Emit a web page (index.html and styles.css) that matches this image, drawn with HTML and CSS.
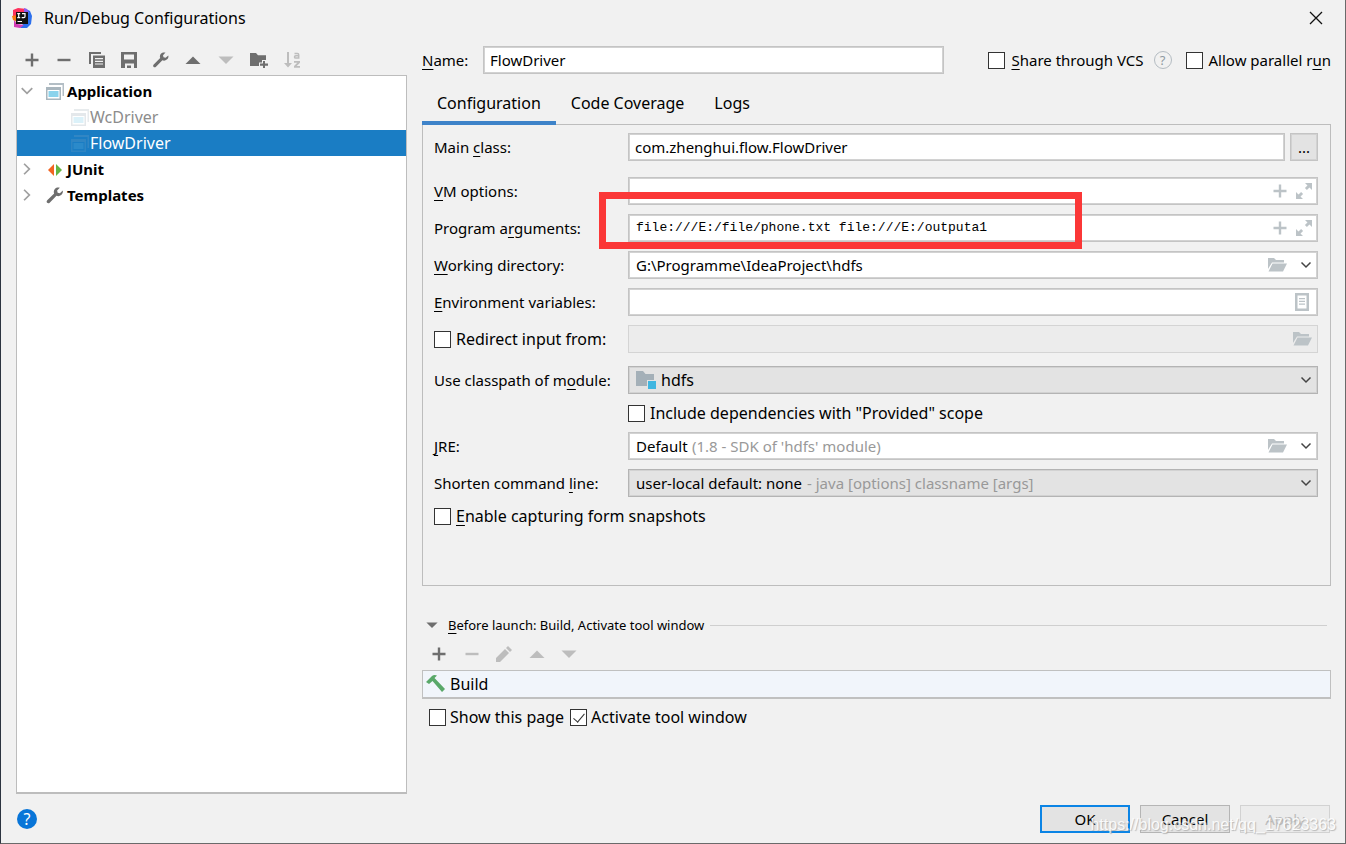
FILE: index.html
```html
<!DOCTYPE html>
<html lang="en">
<head>
<meta charset="utf-8">
<title>Run/Debug Configurations</title>
<link rel="stylesheet" href="styles.css">
</head>
<body>
<svg class="sprite" aria-hidden="true">
  <symbol id="plus" viewBox="0 0 16 16"><path d="M6.800 1.500h2.400v5.300h5.300v2.400H9.200v5.300H6.800V9.200H1.500V6.800h5.300z"/></symbol>
  <symbol id="minus" viewBox="0 0 16 16"><path d="M1.500 6.800h13v2.400h-13z"/></symbol>
  <symbol id="up" viewBox="0 0 16 16"><path d="M8 4.500l7.500 7.500H.5z"/></symbol>
  <symbol id="down" viewBox="0 0 16 16"><path d="M8 12L.5 4.500h15z"/></symbol>
  <symbol id="wrench" viewBox="0 0 16 16"><path d="M15.300 3.400l-2.700 2.400-2.100-.5-.5-2L12.500.6C10.800.1 9 .5 7.900 1.800 6.800 3 6.600 4.700 7.200 6.100L.7 12.500c-.8.9-.7 1.800-.1 2.400.7.6 1.700.6 2.400-.1l6.400-6.500c1.500.6 3.200.4 4.400-.7 1.300-1.100 1.900-2.600 1.500-4.200z"/></symbol>
  <symbol id="app" viewBox="0 0 18 17"><path fill="#b3bec5" d="M3 0h15v13h-1.500V2H3z"/><path fill="#a9b6be" d="M0 4h15v13H0z"/><path fill="#fff" d="M1.500 7h12v8.500h-12z"/><path fill="#8bd3ec" d="M2.500 8h10v6h-10z"/></symbol>
  <symbol id="folder" viewBox="0 0 20 16"><path d="M1 1h6l2 2h8v2.500H5L1 12z"/><path d="M5.500 6.500H20l-4 8H1.500z"/></symbol>
  <symbol id="chevron" viewBox="0 0 12 12"><path fill="none" stroke="currentColor" stroke-width="1.500" d="M1.500 3.500L6 8l4.500-4.500"/></symbol>
  <symbol id="expand" viewBox="0 0 16 16"><path d="M9 0h7v7l-2.500-2.500-2.600 2.600-2-2 2.600-2.600zM7 16H0V9l2.500 2.500 2.600-2.600 2 2-2.600 2.600z"/></symbol>
</svg>
<main class="dialog">
  <header class="titlebar">
    <svg class="logo" viewBox="0 0 20 20"><path fill="#fe315d" d="M1 2l5-2 9 1-2 5-7 4-5-1z"/><path fill="#f97a12" d="M0 8l5-1v7l-4-2z"/><path fill="#2b6fed" d="M14 1l4 2 2 5-1 8-4 4h-7l5-7z"/><path fill="#8b5cf0" d="M12 0l3 1 2 4h-5z"/><path fill="#d23bb4" d="M2 12l3 4 7 1-4 3-6-1z"/><path fill="#111" d="M4 4h12v12H4z"/><path stroke="#fff" stroke-width="1.200" fill="none" d="M5.200 5.700h3M6.700 5.700v4M5.200 9.700h3M10 5.700h3v2.800q0 1.200-1.200 1.200H9.700"/><path fill="#fff" d="M5.500 13h4.500v1H5.500z"/></svg>
    <h1 class="title">Run/Debug Configurations</h1>
    <button class="bare close" aria-label="Close"><svg viewBox="0 0 14 14" width="14" height="14"><path d="M1 1l12 12M13 1L1 13" stroke="#111" stroke-width="1.300"/></svg></button>
  </header>
  <div class="content">
    <aside class="side">
      <div class="tools side-tools">
        <button class="bare" aria-label="Add"><svg class="icon"><use href="#plus"/></svg></button>
        <button class="bare" aria-label="Remove"><svg class="icon"><use href="#minus"/></svg></button>
        <button class="bare" aria-label="Copy"><svg class="icon" viewBox="0 0 16 16"><path d="M0 0h12v2H2v10H0z"/><path fill-rule="evenodd" d="M4 3.500h12V16H4zm2 2.500v1.200h8V6zm0 2.700v1.200h8V8.700zm0 2.700v1.200h8v-1.200z"/></svg></button>
        <button class="bare" aria-label="Save"><svg class="icon" viewBox="0 0 16 16"><path fill-rule="evenodd" d="M0 0h16v16h-3v-4.500H4V16H0zm3 2.500v5h10v-5z"/><path d="M6 13.500h4V16H6z"/></svg></button>
        <button class="bare" aria-label="Edit templates"><svg class="icon"><use href="#wrench"/></svg></button>
        <button class="bare" aria-label="Move up"><svg class="icon"><use href="#up"/></svg></button>
        <button class="bare" aria-label="Move down" disabled><svg class="icon"><use href="#down"/></svg></button>
        <button class="bare" aria-label="New folder"><svg class="icon add-folder" viewBox="0 0 18 16"><path d="M0 1h6l2 2.200h8V8h-4v2.500H9V14H0z"/><path d="M13 9h2v2.500h3v2.200h-3V16h-2v-2.300h-3v-2.200h3z"/></svg></button>
        <button class="bare" aria-label="Sort" disabled><svg class="icon" viewBox="0 0 16 16"><path d="M3 0h2v11h3l-4 4.500L0 11h3zM10 9h6v1.800L12.700 14H16v1.700h-6V14l3.300-3.300H10z"/><path fill="none" stroke="currentColor" stroke-width="1.500" d="M10.500 1.500h3q1.200 0 1.200 1.200v4M14.500 3.800h-2.700q-1.300 0-1.300 1.100t1.300 1.100h2.700"/></svg></button>
      </div>
      <ul class="tree">
        <li class="node group"><svg class="arrow"><use href="#chevron"/></svg><svg class="app-icon"><use href="#app"/></svg>Application</li>
        <li class="node leaf muted"><svg class="app-icon faint"><use href="#app"/></svg>WcDriver</li>
        <li class="node leaf selected"><svg class="app-icon fainter" viewBox="0 0 18 17"><path fill="#b3bec5" d="M3 0h15v13h-1.500V2H3z"/><path fill="#a9b6be" fill-rule="evenodd" d="M0 4h15v13H0zm1.500 3v8.500h12V7z"/><path fill="#8bd3ec" d="M2.500 8h10v6h-10z"/></svg>FlowDriver</li>
        <li class="node group"><svg class="arrow closed"><use href="#chevron"/></svg><svg class="app-icon" viewBox="0 0 18 17"><path fill="#f26522" d="M8 3v12L2 9z"/><path fill="#62b543" d="M10 3v12l6-6z"/></svg>JUnit</li>
        <li class="node group"><svg class="arrow closed"><use href="#chevron"/></svg><svg class="app-icon"><use href="#wrench"/></svg>Templates</li>
      </ul>
    </aside>
    <section class="editor">
      <div class="name-row">
        <label class="name-label" for="name"><u>N</u>ame:</label>
        <input class="box name-input" id="name" value="FlowDriver">
        <label class="check"><input type="checkbox"><span><u>S</u>hare through VCS</span></label>
        <button class="bare hint" aria-label="About sharing">?</button>
        <label class="check"><input type="checkbox"><span>Allow parallel r<u>u</u>n</span></label>
      </div>
      <nav class="tabs">
        <button class="tab active">Configuration</button>
        <button class="tab">Code Coverage</button>
        <button class="tab">Logs</button>
      </nav>
      <div class="panel">
        <div class="row"><label for="main">Main <u>c</u>lass:</label><div class="pair"><input class="box grow" id="main" value="com.zhenghui.flow.FlowDriver"><button class="box browse">...</button></div></div>
        <div class="row wide"><label for="vm"><u>V</u>M options:</label><div class="box field"><input id="vm"><svg class="icon"><use href="#plus"/></svg><svg class="icon"><use href="#expand"/></svg></div></div>
        <div class="row"><label for="args">Program a<u>r</u>guments:</label><div class="box field marked"><input class="mono" id="args" value="file:///E:/file/phone.txt file:///E:/outputa1"><svg class="icon"><use href="#plus"/></svg><svg class="icon"><use href="#expand"/></svg><span class="marker"></span></div></div>
        <div class="row"><label for="dir"><u>W</u>orking directory:</label><div class="box field"><input id="dir" value="G:\Programme\IdeaProject\hdfs"><svg class="folder"><use href="#folder"/></svg><svg class="arrow dark"><use href="#chevron"/></svg></div></div>
        <div class="row"><label for="env"><u>E</u>nvironment variables:</label><div class="box field"><input id="env"><svg class="doc" viewBox="0 0 14 18"><path fill-rule="evenodd" d="M0 0h14v18H0zm2.500 2.500v13h9v-13z"/><path d="M4 5h6v1.200H4zm0 2.800h6V9H4zm0 2.800h6v1.200H4z"/></svg></div></div>
        <div class="row"><label class="check"><input type="checkbox"><span>Redirect input from:</span></label><div class="box field disabled"><input aria-label="Redirect input from" disabled><svg class="folder"><use href="#folder"/></svg></div></div>
        <div class="row spaced"><label for="module">Use classpath of m<u>o</u>dule:</label><div class="box field gray"><svg class="module" viewBox="0 0 20 18"><path fill="#a4b0b8" d="M0 0h7l2.500 3H18v6h-7v6H0z"/><path fill="#40b6e0" d="M12 10h8v8h-8z"/></svg><select class="fill" id="module"><option>hdfs</option></select><svg class="arrow dark"><use href="#chevron"/></svg></div></div>
        <div class="row short"><label class="check offset"><input type="checkbox"><span>Include dependencies with "Provided" scope</span></label></div>
        <div class="row"><label for="jre"><u>J</u>RE:</label><div class="box field"><select id="jre"><option>Default</option></select><span class="note">(1.8 - SDK of 'hdfs' module)</span><svg class="folder"><use href="#folder"/></svg><svg class="arrow dark"><use href="#chevron"/></svg></div></div>
        <div class="row"><label for="shorten">Shorten command <u>l</u>ine:</label><div class="box field gray"><select id="shorten"><option>user-local default: none</option></select><span class="note">- java [options] classname [args]</span><svg class="arrow dark"><use href="#chevron"/></svg></div></div>
        <div class="row short"><label class="check full"><input type="checkbox"><span><u>E</u>nable capturing form snapshots</span></label></div>
      </div>
      <div class="before">
        <svg class="icon small"><use href="#down"/></svg>
        <h2 class="before-title"><u>B</u>efore launch: Build, Activate tool window</h2>
        <hr class="rule">
      </div>
      <div class="tools task-tools">
        <button class="bare" aria-label="Add task"><svg class="icon"><use href="#plus"/></svg></button>
        <button class="bare" aria-label="Remove task" disabled><svg class="icon"><use href="#minus"/></svg></button>
        <button class="bare" aria-label="Edit task" disabled><svg class="icon" viewBox="0 0 16 16"><path d="M0 16v-4l9-9 4 4-9 9zM10 2l2-2 4 4-2 2z"/></svg></button>
        <button class="bare" aria-label="Move task up" disabled><svg class="icon"><use href="#up"/></svg></button>
        <button class="bare" aria-label="Move task down" disabled><svg class="icon"><use href="#down"/></svg></button>
      </div>
      <div class="task"><svg class="hammer" viewBox="0 0 20 18"><path fill="#59a869" d="M0 7l6-6q2-1.500 5-.5L8.500 3l10.500 11-3 3L6.500 6 3 9z"/></svg>Build</div>
      <div class="task-options">
        <label class="check"><input type="checkbox"><span>Show this page</span></label>
        <label class="check"><input type="checkbox" checked><span>Activate tool window</span></label>
      </div>
    </section>
  </div>
  <footer class="footer">
    <button class="bare help" aria-label="Help">?</button>
    <button class="action primary">OK</button>
    <button class="action">Cancel</button>
    <button class="action" disabled>Apply</button>
  </footer>
  <span class="watermark">https://blog.csdn.net/qq_17623363</span>
</main>
</body>
</html>
```
FILE: styles.css
```css
* { box-sizing: border-box; }
body {
  margin: 0;
  font: 16px/24px "Noto Sans", "Open Sans", sans-serif;
  color: #000;
  background: #f1f1f1;
}
button, input, select { font: inherit; color: inherit; margin: 0; }
svg { display: block; flex: none; fill: currentColor; }
u { text-underline-offset: 3px; text-decoration-thickness: 1px; text-decoration-skip-ink: none; }
.sprite { position: absolute; width: 0; height: 0; }
.dialog {
  position: relative;
  display: flex;
  flex-direction: column;
  min-height: 100vh;
  border: solid #6a6a6a;
  border-width: 0 1px 1px;
  border-left-color: #2c3440;
}
.titlebar { display: flex; align-items: center; height: 36px; padding: 0 22px 0 11px; }
.logo { width: 20px; height: 20px; }
.title { flex: 1; margin: 0 0 0 12px; font-size: 16px; font-weight: 400; }
.bare { display: flex; align-items: center; justify-content: center; padding: 0; border: 0; background: none; color: #6e6e6e; }
.bare:disabled { color: #bdbdbd; }
.icon { width: 16px; height: 16px; }
.add-folder { width: 18px; }
.content { flex: 1; display: flex; gap: 15px; padding: 0 14px 0 15px; }
.side { width: 391px; flex: none; display: flex; flex-direction: column; }
.tools { display: flex; align-items: center; justify-content: space-between; }
.side-tools { width: 284px; height: 39px; padding: 9px 0 0 8px; }
.tree { flex: 1; margin: 0; padding: 2px 0 0; list-style: none; background: #fff; border: 1px solid #bdbdbd; border-bottom-width: 2px; }
.node { display: flex; align-items: center; height: 26px; }
.group { padding-left: 3px; font-size: 15px; font-weight: 700; }
.leaf { padding-left: 54px; }
.arrow { width: 12px; height: 12px; color: #a0a0a0; }
.group .arrow { width: 14px; height: 14px; }
.closed { transform: rotate(-90deg); }
.group .app-icon { margin: 0 3px 0 12px; color: #6e6e6e; }
.app-icon { width: 18px; height: 17px; }
.leaf .app-icon { margin-right: 1px; }
.faint { opacity: .3; }
.fainter { opacity: .15; }
.muted { color: #8c8c8c; }
.selected { color: #fff; background: #1a7dc4; }
.editor { flex: 1; min-width: 0; }
.name-row { display: flex; align-items: center; height: 28px; margin-top: 10px; font-size: 15px; }
.name-label { width: 61px; }
.box { min-width: 0; height: 28px; padding: 0 6px; background: #fff; border: 1px solid #c4c4c4; box-shadow: inset 0 0 0 1px #d2d2d2; border-radius: 0; }
.name-input { flex: 1; margin-right: 44px; }
.check { display: flex; align-items: center; gap: 5px; font-size: 16px; line-height: 20px; }
.name-row .check { font-size: 15px; gap: 6px; }
.check input { appearance: none; width: 17px; height: 17px; flex: none; border: 1px solid #333; background: #fff; }
.check input:checked { position: relative; }
.check input:checked::after { content: ""; position: absolute; left: 5px; top: 1px; width: 5px; height: 10px; border: solid #333; border-width: 0 1px 1px 0; transform: rotate(40deg); }
.hint { width: 18px; height: 18px; margin: 0 14px 0 10px; border: 1px solid #b4bcc2; border-radius: 50%; color: #8f9aa2; font-size: 13px; line-height: 16px; }
.tabs { display: flex; height: 40px; margin-top: 11px; }
.tab { padding: 0 15px; border: 0; border-bottom: 4px solid transparent; background: none; }
.active { border-color: #3e83c9; }
.panel { display: flex; flex-direction: column; gap: 9px; min-height: 462px; margin-top: -1px; padding: 8px 12px 8px 11px; border: 1px solid #bdbdbd; font-size: 15px; }
.row { display: grid; grid-template-columns: 194px 1fr; align-items: center; }
.wide { margin-top: 7px; }
.spaced { margin-top: 4px; }
.short { height: 20px; }
.offset { grid-column: 2; }
.full { grid-column: 1 / -1; }
.pair { display: flex; gap: 5px; min-width: 0; }
.grow { flex: 1; }
.browse { width: 28px; padding: 0; background: #e3e3e3; line-height: 20px; }
.field { display: flex; align-items: center; gap: 8px; padding: 0 5px 0 7px; color: #bcc3c7; }
.field input { flex: 1; min-width: 0; padding: 0; border: 0; background: none; color: #000; outline: 0; }
.field select { appearance: none; padding: 0; border: 0; background: none; color: #000; }
.field .fill { flex: 1; margin-left: -4px; font-size: 16px; }
.field .mono { font: 13px/24px "Liberation Mono", monospace; }
.note { flex: 1; color: #999; margin-left: -4px; }
.gray { background: #e3e3e3; border-color: #b4b4b4; }
.disabled { background: #ececec; border-color: #d4d4d4; box-shadow: none; }
.folder { width: 20px; height: 16px; }
.field .arrow { margin-left: 5px; color: #444; }
.doc { width: 14px; height: 18px; margin-right: 3px; }
.module { width: 20px; height: 18px; }
.field .fill { margin-left: -3px; }
.marked { position: relative; }
.marker { position: absolute; z-index: 1; left: -30px; top: -23px; width: 483px; height: 57px; border: 7px solid #fb3737; pointer-events: none; }
.before { display: flex; align-items: center; height: 24px; margin-top: 27px; padding: 0 4px; color: #6e6e6e; }
.small { width: 12px; height: 12px; }
.before-title { margin: 0 6px 0 10px; font-size: 13px; font-weight: 400; color: #000; }
.rule { flex: 1; height: 1px; margin: 0; border: 0; background: #cfcfcf; }
.task-tools { width: 155px; height: 33px; padding-left: 9px; }
.task { display: flex; align-items: center; gap: 4px; height: 29px; padding-left: 3px; background: #f1f5fb; border: 1px solid #c0c0c0; border-bottom-width: 2px; }
.hammer { width: 20px; height: 18px; }
.task-options { display: flex; gap: 6px; margin: 8px 0 0 7px; }
.task-options .check { gap: 4px; }
.footer { display: flex; align-items: center; gap: 10px; height: 49px; padding: 0 15px 0 16px; }
.help { width: 20px; height: 20px; margin-right: auto; border-radius: 50%; background: #0875d8; color: #fff; line-height: 20px; }
.action { width: 90px; height: 28px; padding: 0; border: 1px solid #b5b5b5; background: #e3e3e3; font-size: 15px; line-height: 24px; }
.action:disabled { color: #bdbdbd; border-color: #d2d2d2; background: #ececec; }
.primary { border: 2px solid #0b84e5; }
.watermark { position: absolute; right: 9px; bottom: 6px; font: 16px/24px "Liberation Sans", sans-serif; color: #fff; text-shadow: 1px 1px 1px #aaa; opacity: .8; pointer-events: none; }
```
